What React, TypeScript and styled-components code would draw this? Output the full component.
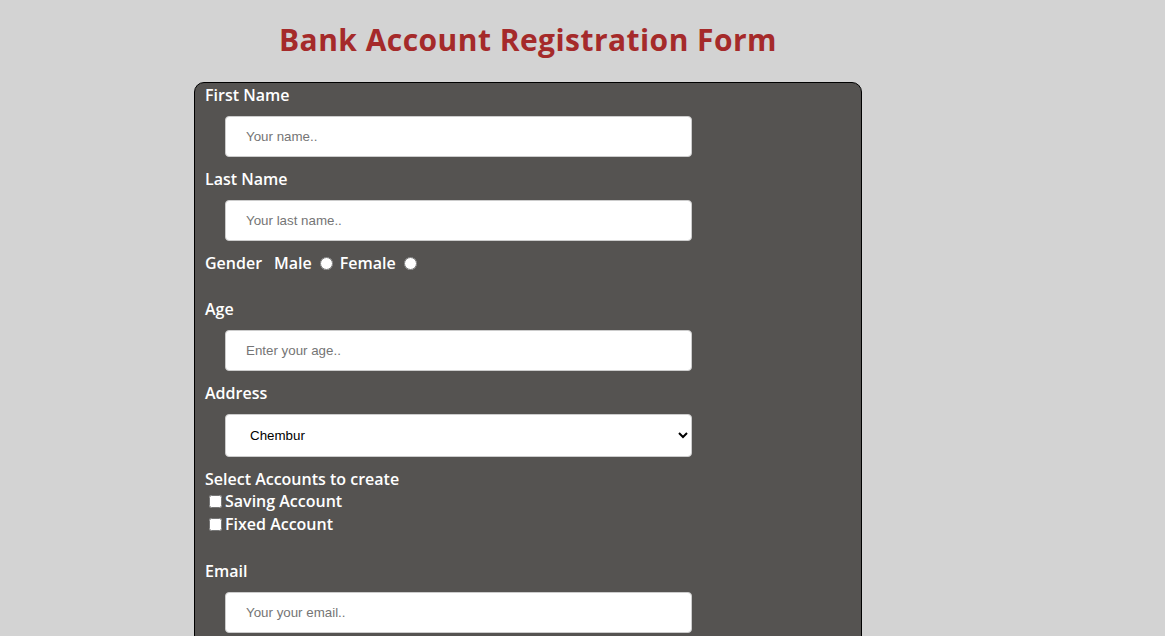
import React from "react";
import styled, { createGlobalStyle } from "styled-components";

const GlobalStyle = createGlobalStyle`
  html, body {
    margin: 0;
    padding: 0;
    background: #d3d3d3;
  }
  body {
    font-family: "Comic Sans MS", "Open Sans", sans-serif;
  }
`;

const Wrapper = styled.div`
  width: 668px;
  margin-left: 194px;
`;

const Title = styled.h1`
  margin: 18px 0 0;
  height: 44px;
  line-height: 44px;
  text-align: center;
  font-size: 30px;
  font-weight: 700;
  letter-spacing: 0.45px;
  color: #a52a2a;
`;

const Card = styled.form`
  margin-top: 20px;
  border: 1px solid #000;
  border-radius: 10px;
  background: #555351;
  padding: 1px 0 40px;
  color: #fff;
`;

const Label = styled.label`
  display: block;
  padding-left: 10px;
  font-size: 16px;
  font-weight: 600;
  line-height: 22px;
  color: #fff;
`;

const Field = styled.div`
  display: flex;
  flex-direction: column;
  margin-bottom: 11px;
`;

const TextInput = styled.input`
  box-sizing: border-box;
  width: 467px;
  height: 41px;
  margin: 10px 0 0 30px;
  padding: 12px 20px;
  border: 1px solid #ccc;
  border-radius: 4px;
  background: #fff;
  font-family: "Liberation Sans", Arial, sans-serif;
  font-size: 13.333px;
  color: #000;
  &::placeholder {
    color: #757575;
  }
`;

const Select = styled.select`
  box-sizing: border-box;
  width: 467px;
  height: 43px;
  margin: 10px 0 0 30px;
  padding: 12px 20px;
  border: 1px solid #ccc;
  border-radius: 4px;
  background: #fff;
  font-family: "Liberation Sans", Arial, sans-serif;
  font-size: 13.333px;
  color: #000;
`;

const InlineRow = styled.div<{ $gapAfter: number }>`
  display: flex;
  align-items: center;
  padding-left: 10px;
  font-size: 16px;
  font-weight: 600;
  line-height: 22px;
  margin-bottom: ${(p) => p.$gapAfter}px;
`;

const GenderTitle = styled.span`
  margin-right: 12px;
`;

const Radio = styled.input`
  width: 13px;
  height: 13px;
  margin: 0 7px 0 8px;
`;

const CheckGroup = styled.div`
  margin-bottom: 24px;
`;

const CheckRow = styled.label`
  display: flex;
  align-items: center;
  padding-left: 10px;
  font-size: 16px;
  font-weight: 600;
  line-height: 23px;
`;

const CheckBox = styled.input`
  width: 13px;
  height: 13px;
  margin: 0 3px 0 4px;
`;

export default function App() {
  return (
    <>
      <GlobalStyle />
      <Wrapper>
        <Title>Bank Account Registration Form</Title>
        <Card onSubmit={(e) => e.preventDefault()}>
          <Field>
            <Label htmlFor="fname">First Name</Label>
            <TextInput id="fname" type="text" placeholder="Your name.." />
          </Field>
          <Field>
            <Label htmlFor="lname">Last Name</Label>
            <TextInput id="lname" type="text" placeholder="Your last name.." />
          </Field>
          <InlineRow $gapAfter={24}>
            <GenderTitle>Gender</GenderTitle>
            <span>Male</span>
            <Radio type="radio" name="gender" value="male" />
            <span>Female</span>
            <Radio type="radio" name="gender" value="female" />
          </InlineRow>
          <Field>
            <Label htmlFor="age">Age</Label>
            <TextInput id="age" type="text" placeholder="Enter your age.." />
          </Field>
          <Field>
            <Label htmlFor="address">Address</Label>
            <Select id="address" defaultValue="Chembur">
              <option value="Chembur">Chembur</option>
              <option value="Kurla">Kurla</option>
              <option value="Dadar">Dadar</option>
            </Select>
          </Field>
          <CheckGroup>
            <Label as="div">Select Accounts to create</Label>
            <CheckRow>
              <CheckBox type="checkbox" />
              Saving Account
            </CheckRow>
            <CheckRow>
              <CheckBox type="checkbox" />
              Fixed Account
            </CheckRow>
          </CheckGroup>
          <Field>
            <Label htmlFor="email">Email</Label>
            <TextInput id="email" type="text" placeholder="Your your email.." />
          </Field>
        </Card>
      </Wrapper>
    </>
  );
}
